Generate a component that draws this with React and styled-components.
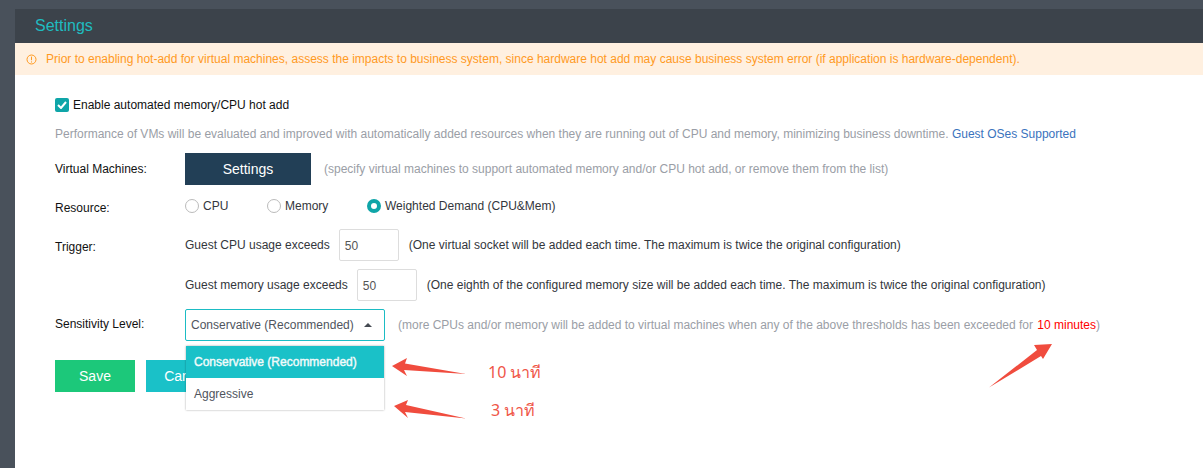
import React from 'react';
import styled, { createGlobalStyle } from 'styled-components';

const GlobalStyle = createGlobalStyle`
  html, body { margin: 0; padding: 0; height: 100%; background: #49515b; overflow: hidden; }
  body { font-family: "Liberation Sans", Arial, sans-serif; font-size: 12px; color: #222; }
`;

const Page = styled.div`
  position: relative;
  width: 1203px;
  height: 468px;
  padding: 9px 0 0 15px;
  box-sizing: border-box;
`;
const Panel = styled.div`
  height: 459px;
  background: #fff;
`;
const Header = styled.div`
  height: 34px;
  line-height: 34px;
  padding-left: 20px;
  background: #3c434b;
  color: #1fbcc0;
  font-size: 16px;
`;
const Notice = styled.div`
  display: flex;
  align-items: center;
  height: 32px;
  padding-left: 11px;
  gap: 9px;
  background: #fff0e0;
  color: #ff9a1f;
`;
const Body = styled.div`
  padding: 20px 0 0 40px;
  position: relative;
`;
const CheckRow = styled.label`
  display: flex;
  align-items: center;
  gap: 4px;
  height: 19px;
  color: #111;
`;
const CheckBox = styled.span`
  display: flex;
  align-items: center;
  justify-content: center;
  width: 14px;
  height: 14px;
  border-radius: 2px;
  background: #0fa5a8;
`;
const Description = styled.div`
  margin-top: 11px;
  height: 19px;
  line-height: 19px;
  color: #9a9ea6;
`;
const GuestLink = styled.a`
  color: #3a73bd;
`;
const Row = styled.div`
  display: flex;
  align-items: center;
  margin-top: ${p => p.$top || 0}px;
  height: ${p => p.$height}px;
`;
const Label = styled.div`
  width: 130px;
  flex: none;
  color: #111;
  margin-top: ${p => p.$shift || 0}px;
`;
const DarkButton = styled.button`
  width: 126px;
  height: 32px;
  border: 0;
  padding: 0;
  background: #223f56;
  color: #fff;
  font: 14px "Liberation Sans", Arial, sans-serif;
`;
const Hint = styled.span`
  color: #9a9ea6;
  margin-left: ${p => p.$left || 0}px;
`;
const RadioGroup = styled.div`
  display: flex;
  align-items: center;
  margin-top: -3px;
`;
const RadioItem = styled.label`
  display: flex;
  align-items: center;
  gap: 4px;
  width: ${p => p.$width}px;
  color: #33363c;
`;
const RadioDot = styled.span`
  box-sizing: border-box;
  width: 14px;
  height: 14px;
  border-radius: 50%;
  background: #fff;
  border: ${p => (p.$on ? '4px solid #0fa5a8' : '1px solid #bbb')};
`;
const TriggerText = styled.span`
  color: #33363c;
`;
const NumberBox = styled.div`
  box-sizing: border-box;
  width: 60px;
  height: 32px;
  margin: 0 10px 0 9px;
  padding-left: 5px;
  line-height: 32px;
  border: 1px solid #ddd;
  border-radius: 2px;
  color: #555;
`;
const Note = styled.span`
  color: #33363c;
`;
const SelectBox = styled.div`
  box-sizing: border-box;
  display: flex;
  align-items: center;
  justify-content: space-between;
  width: 200px;
  height: 32px;
  padding: 0 12px 0 5px;
  border: 1px solid #1bbcc4;
  border-radius: 2px;
  color: #50555e;
`;
const Caret = styled.span`
  width: 0;
  height: 0;
  border-left: 4px solid transparent;
  border-right: 4px solid transparent;
  border-bottom: 4px solid #454a52;
`;
const Red = styled.span`
  color: #ff0000;
  margin-left: 1px;
`;
const Actions = styled.div`
  display: flex;
  gap: 11px;
  margin-top: 19px;
`;
const ActionButton = styled.button`
  width: 80px;
  height: 32px;
  border: 0;
  padding: 0;
  background: ${p => p.$bg};
  color: #fff;
  font: 14px "Liberation Sans", Arial, sans-serif;
`;
const Menu = styled.div`
  position: absolute;
  left: 186px;
  top: 346px;
  width: 198px;
  background: #fff;
  box-shadow: 0 0 2px rgba(0, 0, 0, 0.35);
`;
const MenuItem = styled.div`
  height: 32px;
  line-height: 32px;
  padding-left: 8px;
  color: ${p => (p.$active ? '#f2fbfb' : '#50555e')};
  background: ${p => (p.$active ? '#1ac1c8' : '#fff')};
  -webkit-text-stroke: ${p => (p.$active ? '0.4px #f2fbfb' : '0')};
`;
const Overlay = styled.svg`
  position: absolute;
  left: 0;
  top: 0;
  pointer-events: none;
`;
const Annotation = styled.span`
  position: absolute;
  left: ${p => p.$x}px;
  top: ${p => p.$y}px;
  font: 16px "Noto Sans", "Liberation Sans", sans-serif;
  line-height: 20px;
  color: #ef5648;
`;

export default function App() {
  return (
    <Page>
      <GlobalStyle />
      <Panel>
        <Header>Settings</Header>
        <Notice>
          <svg width="11" height="11" viewBox="0 0 11 11" fill="none" stroke="#ff9a1f">
            <circle cx="5.5" cy="5.5" r="4.5" />
            <path d="M5.5 2.6v3.6M5.5 7.4v1.1" />
          </svg>
          Prior to enabling hot-add for virtual machines, assess the impacts to business system, since hardware hot add may cause business system error (if application is hardware-dependent).
        </Notice>
        <Body>
          <CheckRow>
            <CheckBox>
              <svg width="10" height="8" viewBox="0 0 10 8" fill="none" stroke="#fff" strokeWidth="2">
                <path d="M1 4l3 3 5-6" />
              </svg>
            </CheckBox>
            Enable automated memory/CPU hot add
          </CheckRow>
          <Description>
            Performance of VMs will be evaluated and improved with automatically added resources when they are running out of CPU and memory, minimizing business downtime. <GuestLink>Guest OSes Supported</GuestLink>
          </Description>
          <Row $top={9} $height={32}>
            <Label>Virtual Machines:</Label>
            <DarkButton>Settings</DarkButton>
            <Hint $left={13}>(specify virtual machines to support automated memory and/or CPU hot add, or remove them from the list)</Hint>
          </Row>
          <Row $top={9} $height={27}>
            <Label>Resource:</Label>
            <RadioGroup>
              <RadioItem $width={82}><RadioDot />CPU</RadioItem>
              <RadioItem $width={100}><RadioDot />Memory</RadioItem>
              <RadioItem $width={200}><RadioDot $on />Weighted Demand (CPU&amp;Mem)</RadioItem>
            </RadioGroup>
          </Row>
          <Row $top={8} $height={32}>
            <Label $shift={3}>Trigger:</Label>
            <TriggerText>Guest CPU usage exceeds</TriggerText>
            <NumberBox>50</NumberBox>
            <Note>(One virtual socket will be added each time. The maximum is twice the original configuration)</Note>
          </Row>
          <Row $top={8} $height={32}>
            <Label />
            <TriggerText>Guest memory usage exceeds</TriggerText>
            <NumberBox>50</NumberBox>
            <Note>(One eighth of the configured memory size will be added each time. The maximum is twice the original configuration)</Note>
          </Row>
          <Row $top={8} $height={32}>
            <Label $shift={-3}>Sensitivity Level:</Label>
            <SelectBox>Conservative (Recommended)<Caret /></SelectBox>
            <Hint $left={13}>(more CPUs and/or memory will be added to virtual machines when any of the above thresholds has been exceeded for <Red>10 minutes</Red>)</Hint>
          </Row>
          <Actions>
            <ActionButton $bg="#1cc87a">Save</ActionButton>
            <ActionButton $bg="#1ac1c8">Cancel</ActionButton>
          </Actions>
        </Body>
      </Panel>
      <Menu>
        <MenuItem $active>Conservative (Recommended)</MenuItem>
        <MenuItem>Aggressive</MenuItem>
      </Menu>
      <Overlay width="1203" height="468" viewBox="0 0 1203 468" fill="#f04c3e">
        <path d="M392 366L407 358L405 363.5L466 374L404 370L407 376Z" />
        <path d="M394 406L408 400L406 405L466 418.5L405 412L408 418Z" />
        <path d="M1052 344L1034 345L1037 350L989 387.5L1041 356L1043 359Z" />
      </Overlay>
      <Annotation $x={488} $y={362}>10 นาที</Annotation>
      <Annotation $x={491} $y={400}>3 นาที</Annotation>
    </Page>
  );
}
